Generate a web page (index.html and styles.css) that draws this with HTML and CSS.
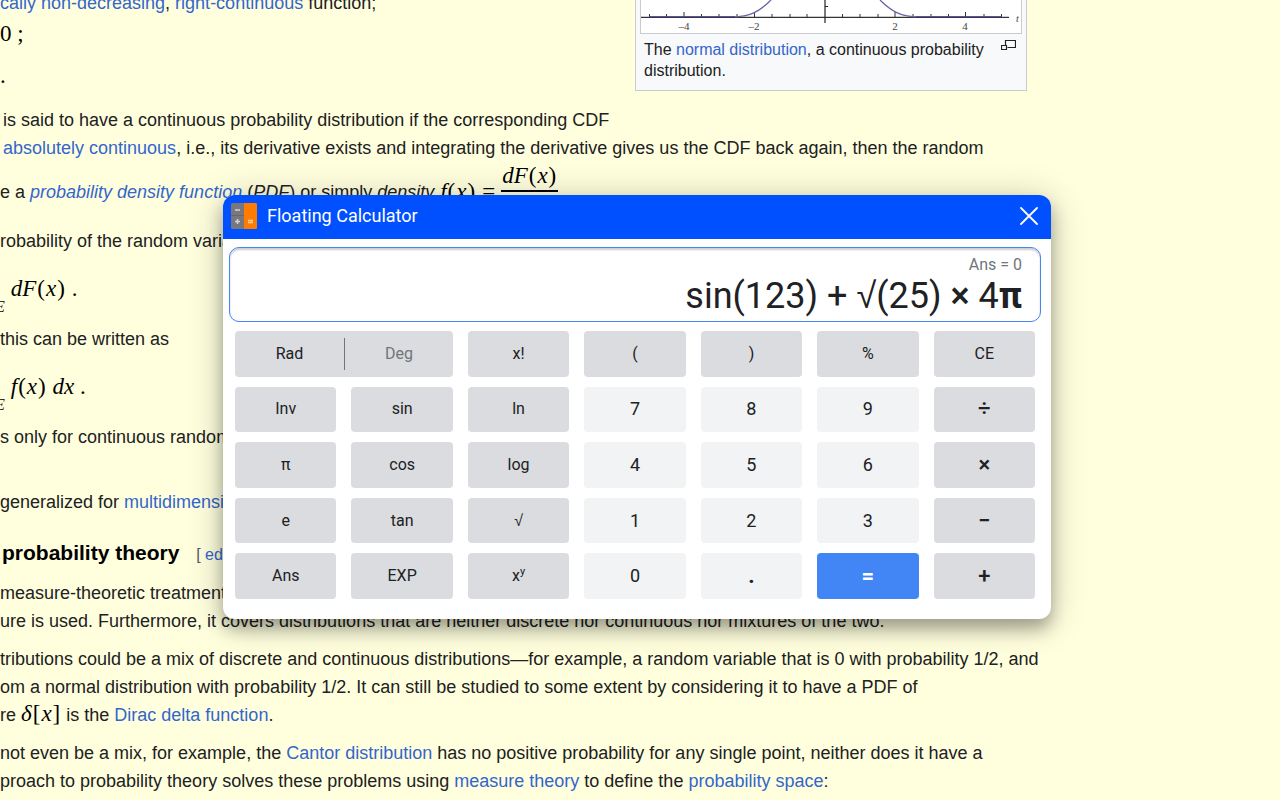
FILE: index.html
```html
<!DOCTYPE html>
<html lang="en">
<head>
<meta charset="utf-8">
<title>Floating Calculator</title>
<link rel="stylesheet" href="styles.css">
</head>
<body>
<main class="page">
  <article class="article">
    <figure class="thumb">
      <svg class="plot" viewBox="1 0 380 33" role="img" aria-label="Normal distribution plot">
        <path d="M1 17.300H369" stroke="#333" stroke-width="1.200"/>
        <path d="M185 0V23M185 6.500h3" stroke="#222" stroke-width="1.200" fill="none"/>
        <path d="M9.500 14v4M26.500 14v4M61.500 14v4M79 14v4M97 14v4M132 14v4M150 14v4M167 14v4M202.500 14v4M220 14v4M238 14v4M273 14v4M291 14v4M308.500 14v4M344 14v4M361.500 14v4M44 12v6M114.500 12v6M255 12v6M325.500 12v6" stroke="#333"/>
        <path d="M9 17H92C110 16.500 119 12 131 0M240 0C252 12 261 16.500 279 17H362" stroke="#6a64a0" stroke-width="1.300" fill="none"/>
        <path d="M9 17.300H95M276 17.300H362" stroke="#383260" stroke-width="1.500"/>
        <g class="ticks"><text x="44" y="30">–4</text><text x="114" y="30">–2</text><text x="255" y="30">2</text><text x="325" y="30">4</text></g>
        <text class="axis" x="376" y="22">t</text>
      </svg>
      <figcaption class="caption">
        <svg class="enlarge" viewBox="0 0 15 11" width="15" height="11" aria-hidden="true"><path d="M4.500 5V.500h10v7H6.500M.500 5.500h5v4h-5z" fill="none" stroke="#222" stroke-width="1.200"/></svg>
        The <a href="#">normal distribution</a>, a continuous probability distribution.
      </figcaption>
    </figure>
    <p class="line"><a href="#">cally non-decreasing</a>, <a href="#">right-continuous</a> function;</p>
    <p class="line formula"><span class="math">0 ;</span></p>
    <p class="line formula-next"><span class="math">.</span></p>
    <p class="line inset intro">is said to have a continuous probability distribution if the corresponding CDF</p>
    <p class="line inset"><a href="#">absolutely continuous</a>, i.e., its derivative exists and integrating the derivative gives us the CDF back again, then the random</p>
    <p class="density"><span>e a <a href="#"><i>probability density function</i></a> (<i>PDF</i>) or simply <i>density</i></span><span class="math"><i>f</i><b>(</b><i>x</i><b>)</b></span><span class="math">=</span><span class="math fraction"><i>dF</i><b>(</b><i>x</i><b>)</b></span></p>
    <p class="line after-density">robability of the random variable</p>
    <p class="integral"><span class="math bound"><i>E</i></span><span class="math"><i>dF</i><b>(</b><i>x</i><b>)</b> .</span></p>
    <p class="line">this can be written as</p>
    <p class="integral"><span class="math bound"><i>E</i></span><span class="math"><i>f</i><b>(</b><i>x</i><b>)</b> <i>dx</i> .</span></p>
    <p class="line">s only for continuous random</p>
    <p class="line general">generalized for <a href="#">multidimensional</a></p>
    <h3 class="heading">probability theory <span class="edit">[ <a href="#">edit</a></span></h3>
    <p class="line">measure-theoretic treatment</p>
    <p class="line block-end">ure is used. Furthermore, it covers distributions that are neither discrete nor continuous nor mixtures of the two.</p>
    <p class="line">tributions could be a mix of discrete and continuous distributions—for example, a random variable that is 0 with probability 1/2, and</p>
    <p class="line">om a normal distribution with probability 1/2. It can still be studied to some extent by considering it to have a PDF of</p>
    <p class="line block-end">re <span class="math"><i>δ</i><b>[</b><i>x</i><b>]</b></span> is the <a href="#">Dirac delta function</a>.</p>
    <p class="line">not even be a mix, for example, the <a href="#">Cantor distribution</a> has no positive probability for any single point, neither does it have a</p>
    <p class="line">proach to probability theory solves these problems using <a href="#">measure theory</a> to define the <a href="#">probability space</a>:</p>
  </article>

  <section class="calculator" aria-label="Floating Calculator">
    <header class="titlebar">
      <svg class="logo" viewBox="0 0 26 26" width="26" height="26" aria-hidden="true">
        <rect width="26" height="26" rx="1.500" fill="#77777c"/>
        <path d="M13 0h11.500A1.500 1.500 0 0 1 26 1.500v23a1.500 1.500 0 0 1-1.500 1.500H13z" fill="#ff7c00"/>
        <path d="M0 12.500h13" stroke="#66666b"/>
        <path d="M4 7h5M4 18.500h5M6.500 16v5" stroke="#d4d4d8" stroke-width="1.500"/>
        <path d="M17 17.500h5M17 19.500h5" stroke="#ffd0a0" stroke-width="1.500"/>
      </svg>
      <h1 class="title">Floating Calculator</h1>
      <button class="close" aria-label="Close"><svg viewBox="0 0 18 18" width="18" height="18"><path d="M1 1l16 16M17 1L1 17" stroke="#fff" stroke-width="1.800" stroke-linecap="round"/></svg></button>
    </header>
    <div class="display">
      <span class="answer">Ans = 0</span>
      <output class="expression">sin(123) + <span class="root">√</span>(25) <b>×</b> 4<strong>π</strong></output>
    </div>
    <div class="keys">
      <div class="mode"><button>Rad</button><button class="off">Deg</button></div>
      <button class="key">x!</button><button class="key">(</button><button class="key">)</button><button class="key">%</button><button class="key">CE</button>
      <button class="key">Inv</button><button class="key">sin</button><button class="key">ln</button><button class="key digit">7</button><button class="key digit">8</button><button class="key digit">9</button><button class="key operator">÷</button>
      <button class="key">π</button><button class="key">cos</button><button class="key">log</button><button class="key digit">4</button><button class="key digit">5</button><button class="key digit">6</button><button class="key operator">×</button>
      <button class="key">e</button><button class="key">tan</button><button class="key root">√</button><button class="key digit">1</button><button class="key digit">2</button><button class="key digit">3</button><button class="key operator">−</button>
      <button class="key">Ans</button><button class="key">EXP</button><button class="key"><span>x<sup>y</sup></span></button><button class="key digit">0</button><button class="key digit point">.</button><button class="key operator equals">=</button><button class="key operator">+</button>
    </div>
  </section>
</main>
</body>
</html>
```
FILE: styles.css
```css
* { box-sizing: border-box; }

body {
  margin: 0;
  background: #ffffde;
  color: #202122;
  font: 18px/28px "Liberation Sans", Arial, sans-serif;
}

p, h1, h3, figure { margin: 0; }
a { color: #3366cc; text-decoration: none; }
button { border: 0; padding: 0; color: inherit; font: inherit; cursor: pointer; }

.page {
  position: relative;
  display: flow-root;
  min-height: 100vh;
  overflow: hidden;
}

/* Article */
.article { max-width: 1027px; margin-top: -11px; }
.line { white-space: nowrap; }
.inset { padding-left: 3px; }
.formula { margin-top: 4px; }
.formula-next { margin-top: 14px; }
.intro { margin-top: 15px; }
.block-end { margin-bottom: 10px; }

.math { font: 23px/28px "Liberation Serif", serif; color: #000; }
.line .math { line-height: 20px; }
.math b { margin: 0 1px; font-weight: normal; }

.density { display: flex; align-items: center; gap: 6px; height: 59px; white-space: nowrap; }
.fraction { align-self: flex-start; padding: 0 1px; border-bottom: 2px solid #000; }
.after-density { margin-top: 6px; }
.integral { display: flex; gap: 6px; padding: 20px 0 22px; }
.bound { align-self: flex-end; height: 10px; margin-left: -5px; font-size: 16px; }
.general { margin-top: 37px; }

.heading { padding: 23px 0 10px 2px; color: #000; font-size: 21px; line-height: 28px; }
.edit { margin-left: 11px; color: #54595d; font-size: 16px; font-weight: normal; }

.thumb {
  float: right;
  width: 392px;
  margin-top: 11px;
  padding: 0 4px 9px;
  border: 1px solid #c8ccd1;
  border-top: 0;
  background: #f8f9fa;
}
.plot { display: block; width: 100%; height: 34px; border: 1px solid #c8ccd1; border-top: 0; background: #fff; }
.ticks { fill: #444; font: 11px "Liberation Serif", serif; text-anchor: middle; }
.axis { fill: #444; font: italic 10px "Liberation Serif", serif; }
.caption { padding: 5px 4px 0; font-size: 16px; line-height: 21px; }
.enlarge { float: right; margin: 1px 2px 0 0; }

/* Calculator window */
.calculator {
  position: absolute;
  top: 195px;
  left: 223px;
  width: 828px;
  border-radius: 12px;
  overflow: hidden;
  background: #fff;
  color: #202124;
  font-family: Roboto, sans-serif;
  box-shadow: 0 10px 16px rgba(0, 0, 0, .28), 0 4px 36px rgba(0, 0, 0, .22);
}
.titlebar {
  display: flex;
  align-items: center;
  gap: 10px;
  height: 44px;
  padding: 0 13px 2px 8px;
  background: #0050ff;
  color: #fff;
}
.title { flex: 1; font-size: 18px; font-weight: 400; line-height: 28px; }
.close { display: flex; background: none; }

.display {
  display: flex;
  flex-direction: column;
  align-items: flex-end;
  height: 75px;
  margin: 8px 10px 0 6px;
  padding: 7px 18px 0;
  border: 1px solid #4285f4;
  border-radius: 10px;
  box-shadow: inset 0 2px 2px rgba(0, 0, 0, .2);
}
.answer { color: #70757a; font-size: 16px; line-height: 20px; }
.expression { font-size: 36px; line-height: 42px; white-space: nowrap; }
.expression b { font-weight: 500; }
.root { font-family: "Liberation Sans", sans-serif; }

.keys {
  display: grid;
  grid-template-columns: repeat(7, 1fr);
  grid-template-rows: repeat(5, 1fr);
  gap: 10px 15px;
  height: 268px;
  margin: 9px 16px 20px 12px;
  font-size: 16px;
  line-height: 20px;
}
.key { border-radius: 4px; background: #dadce0; }
.key sup { font-size: 11px; line-height: 1; }
.digit { background: #f1f3f4; font-size: 18px; }
.point { font-size: 22px; font-weight: 700; }
.operator { font-size: 22px; font-weight: 500; }
.equals { background: #4285f4; color: #fff; font-weight: 700; }

.mode {
  grid-column: span 2;
  display: grid;
  grid-template-columns: 1fr 1fr;
  padding: 7px 0;
  border-radius: 4px;
  background: #dadce0;
}
.mode button { background: none; }
.mode .off { border-left: 1px solid #70757a; color: #70757a; }
```
